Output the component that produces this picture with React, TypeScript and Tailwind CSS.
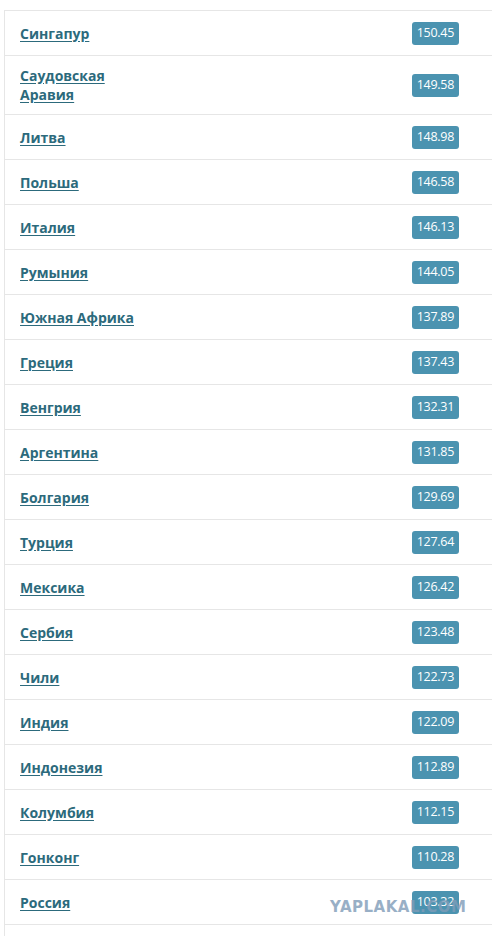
const rows: [string, string][] = [
  ["Сингапур", "150.45"],
  ["Саудовская Аравия", "149.58"],
  ["Литва", "148.98"],
  ["Польша", "146.58"],
  ["Италия", "146.13"],
  ["Румыния", "144.05"],
  ["Южная Африка", "137.89"],
  ["Греция", "137.43"],
  ["Венгрия", "132.31"],
  ["Аргентина", "131.85"],
  ["Болгария", "129.69"],
  ["Турция", "127.64"],
  ["Мексика", "126.42"],
  ["Сербия", "123.48"],
  ["Чили", "122.73"],
  ["Индия", "122.09"],
  ["Индонезия", "112.89"],
  ["Колумбия", "112.15"],
  ["Гонконг", "110.28"],
  ["Россия", "103.32"],
  ["Китай", "101.12"],
];

const App = () => {
  return (
    <div className="relative h-[936px] w-[492px] overflow-hidden bg-white font-['Open_Sans',sans-serif]">
      <div className="mt-[10px] ml-[4px] w-[500px] border-l border-t border-[#e6e6e6]">
        {rows.map(([name, value]) => (
          <div key={name} className="flex min-h-[45px] items-center justify-between border-b border-[#e6e6e6] py-[10px] pl-[15px] pr-[45px]">
            <a href="#" className="w-[125px] text-[14px] font-bold leading-[19px] text-[#2c6a7c] underline underline-offset-2">
              {name}
            </a>
            <span className="flex h-[23px] items-center rounded-[3px] bg-[#4b93b0] px-[5px] text-[12.5px] leading-none tracking-[-0.3px] text-white">
              {value}
            </span>
          </div>
        ))}
      </div>
      <div className="absolute left-[330px] top-[896px] font-['DejaVu_Sans',sans-serif] text-[15px] font-bold tracking-[0.5px] text-[#7f9cb8] opacity-80">
        YAPLAKAL.COM
      </div>
    </div>
  );
};

export default App;
